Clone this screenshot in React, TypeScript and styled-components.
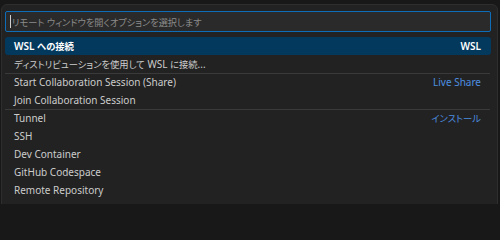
import React from "react";
import styled, { createGlobalStyle } from "styled-components";

const Global = createGlobalStyle`
  html, body { margin: 0; padding: 0; background: #181818; }
  body {
    width: 500px; height: 204px; overflow: hidden;
    font-family: "Noto Sans", "Noto Sans CJK JP", sans-serif;
    font-feature-settings: "palt";
  }
`;

const Panel = styled.div`
  margin: 4px 0 0 1px;
  width: 497px;
  height: 210px;
  box-sizing: border-box;
  background: #222222;
  border: 1px solid #2e2e2e;
  border-radius: 6px;
  padding: 6px 6px 0 3px;
  display: flex;
  flex-direction: column;
  gap: 5px;
`;

const InputBox = styled.div`
  height: 21px;
  box-sizing: border-box;
  background: #2a2a2a;
  border: 1px solid #0f6db8;
  border-radius: 2px;
  display: flex;
  align-items: center;
  padding-left: 4px;
  font-size: 9.2px;
  color: #8b8b8b;
  white-space: pre;
`;

const Caret = styled.span`
  width: 1px;
  height: 13px;
  background: #cfcfcf;
  margin-right: 1px;
`;

const List = styled.div`
  display: flex;
  flex-direction: column;
`;

const Row = styled.div<{ $selected?: boolean; $sep?: boolean }>`
  position: relative;
  height: 18px;
  display: flex;
  align-items: center;
  justify-content: space-between;
  padding: 0 10px 0 9px;
  border-radius: 3px;
  font-size: 10px;
  white-space: pre;
  color: ${(p) => (p.$selected ? "#ffffff" : "#cccccc")};
  background: ${(p) => (p.$selected ? "#04395e" : "transparent")};
  ${(p) =>
    p.$sep &&
    `&::before { content: ""; position: absolute; left: 0; right: 1px; top: 0; height: 1px; background: #3a3a3a; }`}
`;

const Label = styled.span<{ $bold?: boolean }>`
  font-weight: ${(p) => (p.$bold ? 600 : 400)};
`;

const Detail = styled.span<{ $link?: boolean }>`
  color: ${(p) => (p.$link ? "#4d8fe0" : "#ffffff")};
  font-weight: ${(p) => (p.$link ? 400 : 600)};
`;

const Jp = styled.span`
  font-size: 9.3px;
`;

function Text({ s }: { s: string }) {
  const parts = s.split(/([\u3000-\u30ff\u4e00-\u9fff]+)/);
  return (
    <>
      {parts.map((p, i) =>
        /[\u3000-\u30ff\u4e00-\u9fff]/.test(p) ? <Jp key={i}>{p}</Jp> : p
      )}
    </>
  );
}

type Item = { label: string; detail?: string; link?: boolean; sep?: boolean; selected?: boolean };

const items: Item[] = [
  { label: "WSL への接続", detail: "WSL", selected: true },
  { label: "ディストリビューションを使用して WSL に接続..." },
  { label: "Start Collaboration Session (Share)", detail: "Live Share", link: true, sep: true },
  { label: "Join Collaboration Session" },
  { label: "Tunnel", detail: "インストール", link: true, sep: true },
  { label: "SSH" },
  { label: "Dev Container" },
  { label: "GitHub Codespace" },
  { label: "Remote Repository" },
];

export default function App() {
  return (
    <>
      <Global />
      <Panel>
        <InputBox>
          <Caret />
          リモート ウィンドウを開くオプションを選択します
        </InputBox>
        <List>
          {items.map((it) => (
            <Row key={it.label} $selected={it.selected} $sep={it.sep}>
              <Label $bold={it.selected}>
                <Text s={it.label} />
              </Label>
              {it.detail && (
                <Detail $link={it.link}>
                  <Text s={it.detail} />
                </Detail>
              )}
            </Row>
          ))}
        </List>
      </Panel>
    </>
  );
}
